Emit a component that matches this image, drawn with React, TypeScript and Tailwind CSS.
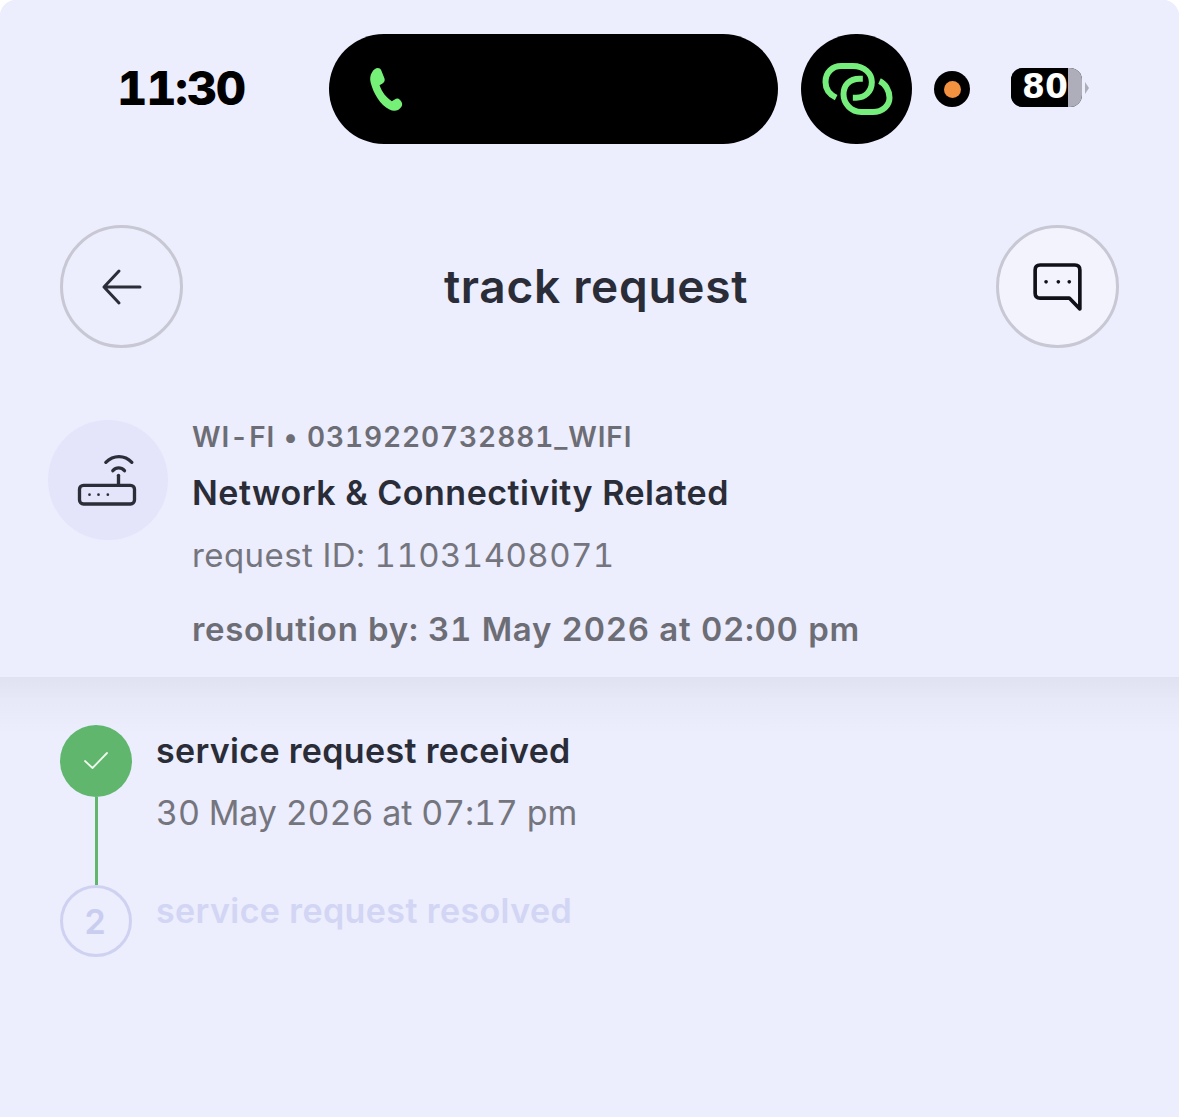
export default function App() {
  const font = { fontFamily: "Inter, 'Liberation Sans', sans-serif" };
  return (
    <div style={font} className="w-[1179px] h-[1117px] overflow-hidden bg-white">
      <div className="w-full h-full rounded-t-[16px] bg-[#ecedfd] overflow-hidden flex flex-col">
        <div className="h-[677px] bg-[#ecedfd] flex flex-col">
          {/* status bar */}
          <div className="flex items-center pt-[34px] h-[144px]">
            <div className="w-[329px] pl-[117px] text-[47px] leading-[110px] font-extrabold text-black tracking-[-1.2px] tabular-nums mt-[-2px]">11:30</div>
            <div className="w-[449px] h-[110px] rounded-full bg-black flex items-center pl-[38px]">
              <svg width="38" height="50" viewBox="800 140 115 150" fill="#76f178">
                <path d="M815 165C822 150 838 147 843 158L853 183C855 190 852 195 847 198L838 204C845 225 860 243 875 252L884 247C889 243 895 243 900 248C908 255 908 265 903 270C895 282 880 283 868 277C840 262 820 230 811 195C808 183 810 173 815 165Z" />
              </svg>
            </div>
            <div className="ml-[23px] w-[111px] h-[110px] rounded-full bg-black flex items-center justify-center">
              <svg width="72" height="55" viewBox="120 125 215 165" fill="none" stroke="#76ee7c" strokeWidth="18">
                <path d="M165 232C140 220 133 200 133 185C133 155 155 137 180 137L215 137C250 137 272 160 272 185C272 215 250 232 225 232L215 232" />
                <path d="M245 175L235 175C205 175 187 195 187 222C187 250 210 275 240 275L275 275C305 275 325 255 325 232C325 210 312 190 295 182" />
              </svg>
            </div>
            <div className="ml-[22px] w-[36px] h-[36px] rounded-full bg-black flex items-center justify-center">
              <div className="w-[17px] h-[17px] rounded-full bg-[#f2913f]" />
            </div>
            <div className="ml-[41px] mt-[-3px] flex items-center gap-[3px]">
              <div className="w-[71px] h-[39px] rounded-[12px] overflow-hidden bg-black flex">
                <div className="w-[57px] bg-black text-white text-right leading-[38px]" style={{ fontFamily: "'DejaVu Sans', sans-serif" }}>
                  <span className="text-[33px] font-bold">80</span>
                </div>
                <div className="w-[14px] bg-[#aeaebb]" />
              </div>
              <div className="w-0 h-0 border-y-[6px] border-y-transparent border-l-[4px] border-l-[#aeaebb]" />
            </div>
          </div>

          {/* nav */}
          <div className="flex items-center justify-between mt-[81px] pl-[60px] pr-[60px]">
            <div className="w-[123px] h-[123px] rounded-full border-[3px] border-[#c8c8d4] flex items-center justify-center">
              <svg width="44" height="40" viewBox="0 0 44 40" fill="none" stroke="#2b2d38" strokeWidth="3" strokeLinecap="round" strokeLinejoin="round">
                <path d="M4 20h36M19 4 4 20l15 16" />
              </svg>
            </div>
            <div className="text-[46px] leading-[60px] font-semibold text-[#2a2d38] ml-[13px] tracking-[0.7px] mt-[-2px]">track request</div>
            <div className="w-[123px] h-[123px] rounded-full border-[3px] border-[#c8c8d4] bg-[#f3f3fe] flex items-center justify-center">
              <svg width="55" height="53" viewBox="150 120 165 160" fill="none" stroke="#101018" strokeWidth="11" strokeLinecap="round" strokeLinejoin="round">
                <path d="M180 135H285C295 135 300 140 300 150V268L268 235H180C170 235 165 230 165 220V150C165 140 170 135 180 135Z" />
                <g fill="#101018" stroke="none">
                  <circle cx="198" cy="186" r="5.5" />
                  <circle cx="235" cy="186" r="5.5" />
                  <circle cx="268" cy="186" r="5.5" />
                </g>
              </svg>
            </div>
          </div>

          {/* request */}
          <div className="flex mt-[72px] pl-[48px]">
            <div className="w-[120px] h-[120px] rounded-full bg-[#e4e5fa] flex items-center justify-center">
              <svg className="mr-[2px]" width="62" height="55" viewBox="110 130 185 165" fill="none" stroke="#2b2d38" strokeWidth="10" strokeLinecap="round" strokeLinejoin="round">
                <rect x="120" y="227" width="165" height="56" rx="12" />
                <path d="M237 197V227" />
                <path d="M199 158C222 135 255 135 277 158" />
                <path d="M220 183C230 172 245 172 255 183" />
                <g fill="#2b2d38" stroke="none">
                  <circle cx="150" cy="255" r="4" />
                  <circle cx="177" cy="255" r="4" />
                  <circle cx="205" cy="255" r="4" />
                </g>
              </svg>
            </div>
            <div className="ml-[24px] mt-[-3px] flex flex-col">
              <div className="text-[28px] leading-[40px] font-semibold tracking-[0.9px] tabular-nums text-[#6d6d75]">WI-FI • 0319220732881_WIFI</div>
              <div className="text-[34px] leading-[44px] mt-[14px] font-semibold tracking-[0.5px] text-[#2a2d38]">Network &amp; Connectivity Related</div>
              <div className="text-[33px] leading-[44px] mt-[18px] tabular-nums tracking-[0.42px] text-[#75757d]">request ID: 11031408071</div>
              <div className="text-[33px] leading-[44px] mt-[30px] font-semibold tabular-nums tracking-[0.7px] text-[#6d6d75]">resolution by: 31 May 2026 at 02:00 pm</div>
            </div>
          </div>
        </div>

        {/* timeline */}
        <div className="flex-1 flex items-start pt-[48px] pl-[60px] bg-[linear-gradient(to_bottom,#e1e2f1_0px,#e8e9f8_24px,#ecedfd_58px)]">
          <div className="flex flex-col items-center w-[72px]">
            <div className="w-[72px] h-[72px] rounded-full bg-[#5fb66c] flex items-center justify-center">
              <svg width="26" height="20" viewBox="0 0 26 20" fill="none" stroke="#eef8ee" strokeWidth="1.800" strokeLinecap="round" strokeLinejoin="round">
                <path d="M2 10l7.500 7L24 2" />
              </svg>
            </div>
            <div className="w-[3px] h-[88px] bg-[#5fb66c]" />
            <div className="w-[72px] h-[72px] rounded-full border-[3px] border-[#ced2f0] flex items-center justify-center text-[34px] font-semibold text-[#c9cdef] pr-[2px]">2</div>
          </div>
          <div className="ml-[24px] flex flex-col">
            <div className="text-[34px] leading-[52px] font-semibold tracking-[0.33px] text-[#2a2d38]">service request received</div>
            <div className="text-[34px] leading-[44px] mt-[14px] tracking-[-0.15px] tabular-nums text-[#75757d]">30 May 2026 at 07:17 pm</div>
            <div className="text-[34px] leading-[52px] mt-[50px] font-semibold tracking-[0.4px] text-[#d2d5f3]">service request resolved</div>
          </div>
        </div>
      </div>
    </div>
  );
}
